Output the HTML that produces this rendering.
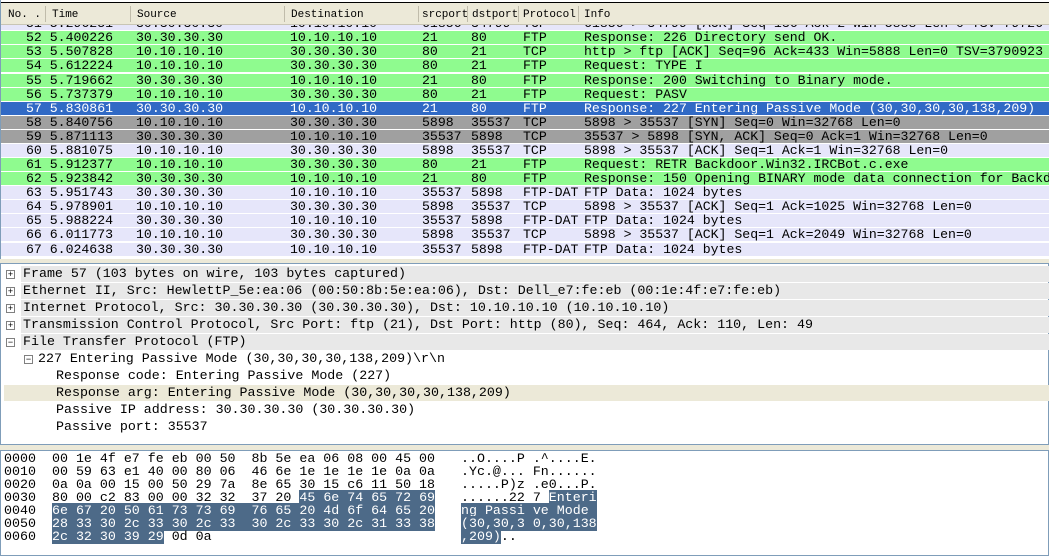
<!DOCTYPE html>
<html><head><meta charset="utf-8"><style>
*{margin:0;padding:0;box-sizing:border-box}
body{width:1049px;height:556px;overflow:hidden;background:#ece9d8;position:relative;font-family:"Liberation Mono",monospace}
.list{position:absolute;left:0;top:0;width:1049px;height:259px;overflow:hidden;background:#fff;border-left:1px solid #7f9db9}
.hdr{position:absolute;left:0;width:1049px;background:#ece9d8;border-top:1px solid #000;z-index:2;font-size:11px;color:#000;top:2px;height:23px;border-bottom:1px solid #c8c5b5}
.hdr span{position:absolute;top:6px}
.hdr i{position:absolute;top:3px;width:1px;height:16px;background:#c0bcab}
.r{position:absolute;left:0;width:1049px;height:14px;font-size:13.2px;line-height:14px;white-space:pre;border-bottom:1px solid #fff}
.r span{position:absolute;top:0}
.g{background:#8ffb8f}.l{background:#e6e6fa}.d{background:#a0a0a0}.s{background:#316ac5;color:#fff}
.det{position:absolute;left:0;top:263px;width:1049px;height:182px;background:#fff;border:1px solid #7f9db9;font-size:13.3px}
.dl{position:absolute;left:2px;width:1047px;height:16px;line-height:16px;white-space:pre}
.gr{background:#e8e8e8}.hl{background:#ece9d8}
.bx{position:absolute;top:4px;width:9px;height:9px;border:1px solid #808080;background:#fff;font-size:9px;line-height:7px;text-align:center;font-family:"Liberation Sans",sans-serif;color:#000}
.hex{position:absolute;left:0;top:450px;width:1049px;height:106px;background:#fff;border:1px solid #7f9db9;font-size:13.3px}
.hl2{position:absolute;height:13px;line-height:13px;white-space:pre}
.sel{background:#4d6a88;color:#fff}
</style></head><body>
<div class="list">
<div class="hdr">
<span style="left:7px">No. .</span><i style="left:44px"></i>
<span style="left:51px">Time</span><i style="left:129px"></i>
<span style="left:136px">Source</span><i style="left:283px"></i>
<span style="left:290px">Destination</span><i style="left:417px"></i>
<span style="left:421px">srcport</span><i style="left:466px"></i>
<span style="left:471px">dstport</span><i style="left:517px"></i>
<span style="left:522px">Protocol</span><i style="left:577px"></i>
<span style="left:583px">Info</span>
</div>
<div class="r l" style="top:17px"><span style="left:25px">51 5.296251</span><span style="left:135px">30.30.30.30</span><span style="left:289px">10.10.10.10</span><span style="left:421px">61856</span><span style="left:470px">34799</span><span style="left:522px">TCP</span><span style="left:583px">61856 > 34799 [ACK] Seq=136 Ack=2 Win=5888 Len=0 TSV=79726</span></div>
<div class="r g" style="top:31px"><span style="left:25px">52 5.400226</span><span style="left:135px">30.30.30.30</span><span style="left:289px">10.10.10.10</span><span style="left:421px">21</span><span style="left:470px">80</span><span style="left:522px">FTP</span><span style="left:583px">Response: 226 Directory send OK.</span></div>
<div class="r g" style="top:45px"><span style="left:25px">53 5.507828</span><span style="left:135px">10.10.10.10</span><span style="left:289px">30.30.30.30</span><span style="left:421px">80</span><span style="left:470px">21</span><span style="left:522px">TCP</span><span style="left:583px">http > ftp [ACK] Seq=96 Ack=433 Win=5888 Len=0 TSV=3790923</span></div>
<div class="r g" style="top:59px"><span style="left:25px">54 5.612224</span><span style="left:135px">10.10.10.10</span><span style="left:289px">30.30.30.30</span><span style="left:421px">80</span><span style="left:470px">21</span><span style="left:522px">FTP</span><span style="left:583px">Request: TYPE I</span></div>
<div class="r g" style="top:74px"><span style="left:25px">55 5.719662</span><span style="left:135px">30.30.30.30</span><span style="left:289px">10.10.10.10</span><span style="left:421px">21</span><span style="left:470px">80</span><span style="left:522px">FTP</span><span style="left:583px">Response: 200 Switching to Binary mode.</span></div>
<div class="r g" style="top:88px"><span style="left:25px">56 5.737379</span><span style="left:135px">10.10.10.10</span><span style="left:289px">30.30.30.30</span><span style="left:421px">80</span><span style="left:470px">21</span><span style="left:522px">FTP</span><span style="left:583px">Request: PASV</span></div>
<div class="r s" style="top:102px"><span style="left:25px">57 5.830861</span><span style="left:135px">30.30.30.30</span><span style="left:289px">10.10.10.10</span><span style="left:421px">21</span><span style="left:470px">80</span><span style="left:522px">FTP</span><span style="left:583px">Response: 227 Entering Passive Mode (30,30,30,30,138,209)</span></div>
<div class="r d" style="top:116px"><span style="left:25px">58 5.840756</span><span style="left:135px">10.10.10.10</span><span style="left:289px">30.30.30.30</span><span style="left:421px">5898</span><span style="left:470px">35537</span><span style="left:522px">TCP</span><span style="left:583px">5898 > 35537 [SYN] Seq=0 Win=32768 Len=0</span></div>
<div class="r d" style="top:130px"><span style="left:25px">59 5.871113</span><span style="left:135px">30.30.30.30</span><span style="left:289px">10.10.10.10</span><span style="left:421px">35537</span><span style="left:470px">5898</span><span style="left:522px">TCP</span><span style="left:583px">35537 > 5898 [SYN, ACK] Seq=0 Ack=1 Win=32768 Len=0</span></div>
<div class="r l" style="top:144px"><span style="left:25px">60 5.881075</span><span style="left:135px">10.10.10.10</span><span style="left:289px">30.30.30.30</span><span style="left:421px">5898</span><span style="left:470px">35537</span><span style="left:522px">TCP</span><span style="left:583px">5898 > 35537 [ACK] Seq=1 Ack=1 Win=32768 Len=0</span></div>
<div class="r g" style="top:158px"><span style="left:25px">61 5.912377</span><span style="left:135px">10.10.10.10</span><span style="left:289px">30.30.30.30</span><span style="left:421px">80</span><span style="left:470px">21</span><span style="left:522px">FTP</span><span style="left:583px">Request: RETR Backdoor.Win32.IRCBot.c.exe</span></div>
<div class="r g" style="top:172px"><span style="left:25px">62 5.923842</span><span style="left:135px">30.30.30.30</span><span style="left:289px">10.10.10.10</span><span style="left:421px">21</span><span style="left:470px">80</span><span style="left:522px">FTP</span><span style="left:583px">Response: 150 Opening BINARY mode data connection for Backd</span></div>
<div class="r l" style="top:186px"><span style="left:25px">63 5.951743</span><span style="left:135px">30.30.30.30</span><span style="left:289px">10.10.10.10</span><span style="left:421px">35537</span><span style="left:470px">5898</span><span style="left:522px">FTP-DAT</span><span style="left:583px">FTP Data: 1024 bytes</span></div>
<div class="r l" style="top:200px"><span style="left:25px">64 5.978901</span><span style="left:135px">10.10.10.10</span><span style="left:289px">30.30.30.30</span><span style="left:421px">5898</span><span style="left:470px">35537</span><span style="left:522px">TCP</span><span style="left:583px">5898 > 35537 [ACK] Seq=1 Ack=1025 Win=32768 Len=0</span></div>
<div class="r l" style="top:214px"><span style="left:25px">65 5.988224</span><span style="left:135px">30.30.30.30</span><span style="left:289px">10.10.10.10</span><span style="left:421px">35537</span><span style="left:470px">5898</span><span style="left:522px">FTP-DAT</span><span style="left:583px">FTP Data: 1024 bytes</span></div>
<div class="r l" style="top:228px"><span style="left:25px">66 6.011773</span><span style="left:135px">10.10.10.10</span><span style="left:289px">30.30.30.30</span><span style="left:421px">5898</span><span style="left:470px">35537</span><span style="left:522px">TCP</span><span style="left:583px">5898 > 35537 [ACK] Seq=1 Ack=2049 Win=32768 Len=0</span></div>
<div class="r l" style="top:243px"><span style="left:25px">67 6.024638</span><span style="left:135px">30.30.30.30</span><span style="left:289px">10.10.10.10</span><span style="left:421px">35537</span><span style="left:470px">5898</span><span style="left:522px">FTP-DAT</span><span style="left:583px">FTP Data: 1024 bytes</span></div>
</div>

<div class="det">
<div class="dl gr" style="top:2px;left:20px"><span style="padding-left:2px">Frame 57 (103 bytes on wire, 103 bytes captured)</span></div><div class="bx" style="left:5px;top:6px">+</div>
<div class="dl gr" style="top:19px;left:20px"><span style="padding-left:2px">Ethernet II, Src: HewlettP_5e:ea:06 (00:50:8b:5e:ea:06), Dst: Dell_e7:fe:eb (00:1e:4f:e7:fe:eb)</span></div><div class="bx" style="left:5px;top:23px">+</div>
<div class="dl gr" style="top:36px;left:20px"><span style="padding-left:2px">Internet Protocol, Src: 30.30.30.30 (30.30.30.30), Dst: 10.10.10.10 (10.10.10.10)</span></div><div class="bx" style="left:5px;top:40px">+</div>
<div class="dl gr" style="top:53px;left:20px"><span style="padding-left:2px">Transmission Control Protocol, Src Port: ftp (21), Dst Port: http (80), Seq: 464, Ack: 110, Len: 49</span></div><div class="bx" style="left:5px;top:57px">+</div>
<div class="dl gr" style="top:70px;left:20px"><span style="padding-left:2px">File Transfer Protocol (FTP)</span></div><div class="bx" style="left:5px;top:74px">−</div>
<div class="dl" style="top:87px;left:37px">227 Entering Passive Mode (30,30,30,30,138,209)\r\n</div><div class="bx" style="left:23px;top:91px">−</div>
<div class="dl" style="top:104px;left:55px">Response code: Entering Passive Mode (227)</div>
<div class="dl hl" style="top:121px;left:3px;padding-left:52px">Response arg: Entering Passive Mode (30,30,30,30,138,209)</div>
<div class="dl" style="top:138px;left:55px">Passive IP address: 30.30.30.30 (30.30.30.30)</div>
<div class="dl" style="top:155px;left:55px">Passive port: 35537</div>
</div>

<div class="hex">
<div class="hl2" style="left:3px;top:1px">0000</div><div class="hl2" style="left:51px;top:1px">00 1e 4f e7 fe eb 00 50  8b 5e ea 06 08 00 45 00</div><div class="hl2" style="left:460px;top:1px">..O....P .^....E.</div>
<div class="hl2" style="left:3px;top:14px">0010</div><div class="hl2" style="left:51px;top:14px">00 59 63 e1 40 00 80 06  46 6e 1e 1e 1e 1e 0a 0a</div><div class="hl2" style="left:460px;top:14px">.Yc.@... Fn......</div>
<div class="hl2" style="left:3px;top:27px">0020</div><div class="hl2" style="left:51px;top:27px">0a 0a 00 15 00 50 29 7a  8e 65 30 15 c6 11 50 18</div><div class="hl2" style="left:460px;top:27px">.....P)z .e0...P.</div>
<div class="hl2" style="left:3px;top:40px">0030</div><div class="hl2" style="left:51px;top:40px">80 00 c2 83 00 00 32 32  37 20 <span class="sel">45 6e 74 65 72 69</span></div><div class="hl2" style="left:460px;top:40px">......22 7 <span class="sel">Enteri</span></div>
<div class="hl2" style="left:3px;top:53px">0040</div><div class="hl2" style="left:51px;top:53px"><span class="sel">6e 67 20 50 61 73 73 69  76 65 20 4d 6f 64 65 20</span></div><div class="hl2" style="left:460px;top:53px"><span class="sel">ng Passi ve Mode </span></div>
<div class="hl2" style="left:3px;top:66px">0050</div><div class="hl2" style="left:51px;top:66px"><span class="sel">28 33 30 2c 33 30 2c 33  30 2c 33 30 2c 31 33 38</span></div><div class="hl2" style="left:460px;top:66px"><span class="sel">(30,30,3 0,30,138</span></div>
<div class="hl2" style="left:3px;top:79px">0060</div><div class="hl2" style="left:51px;top:79px"><span class="sel">2c 32 30 39 29</span> 0d 0a</div><div class="hl2" style="left:460px;top:79px"><span class="sel">,209)</span>..</div>
</div>
</body></html>
